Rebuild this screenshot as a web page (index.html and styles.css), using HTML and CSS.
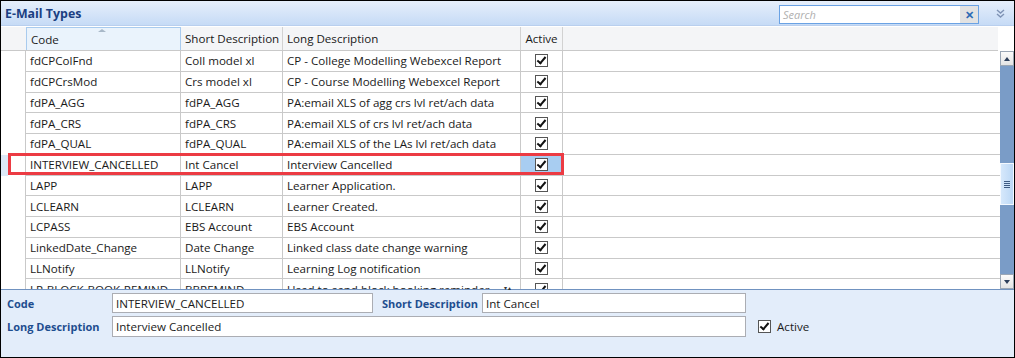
FILE: index.html
```html
<!DOCTYPE html>
<html lang="en">
<head>
    <meta charset="UTF-8">
    <title>E-Mail Types</title>
    <link rel="stylesheet" href="styles.css">
</head>
<body>
    <div class="window">
        <div class="titlebar">
            <span class="title">E-Mail Types</span>
            <div class="search">
                <span class="search-hint">Search</span>
                <span class="search-clear">&#x2715;</span>
            </div>
            <svg class="collapse" width="9" height="9" viewBox="0 0 9 9">
                <path d="M1 1 L4.5 4 L8 1 M1 5 L4.5 8 L8 5" fill="none" stroke="#7f93b5" stroke-width="1.4"/>
            </svg>
        </div>

        <div class="grid">
            <div class="row head">
                <div class="cell ind"></div>
                <div class="cell code sorted">Code<span class="sort-arrow"></span></div>
                <div class="cell short">Short Description</div>
                <div class="cell long">Long Description</div>
                <div class="cell active">Active</div>
                <div class="cell fill"></div>
            </div>

            <div class="body">
                <div class="rows">
                    <div class="row">
                        <div class="cell ind"></div>
                        <div class="cell code">fdCPColFnd</div>
                        <div class="cell short">Coll model xl</div>
                        <div class="cell long">CP - College Modelling Webexcel Report</div>
                        <div class="cell active"><span class="check"></span></div>
                        <div class="cell fill"></div>
                    </div>
                    <div class="row">
                        <div class="cell ind"></div>
                        <div class="cell code">fdCPCrsMod</div>
                        <div class="cell short">Crs model xl</div>
                        <div class="cell long">CP - Course Modelling Webexcel Report</div>
                        <div class="cell active"><span class="check"></span></div>
                        <div class="cell fill"></div>
                    </div>
                    <div class="row">
                        <div class="cell ind"></div>
                        <div class="cell code">fdPA_AGG</div>
                        <div class="cell short">fdPA_AGG</div>
                        <div class="cell long">PA:email XLS of agg crs lvl ret/ach data</div>
                        <div class="cell active"><span class="check"></span></div>
                        <div class="cell fill"></div>
                    </div>
                    <div class="row">
                        <div class="cell ind"></div>
                        <div class="cell code">fdPA_CRS</div>
                        <div class="cell short">fdPA_CRS</div>
                        <div class="cell long">PA:email XLS of crs lvl ret/ach data</div>
                        <div class="cell active"><span class="check"></span></div>
                        <div class="cell fill"></div>
                    </div>
                    <div class="row">
                        <div class="cell ind"></div>
                        <div class="cell code">fdPA_QUAL</div>
                        <div class="cell short">fdPA_QUAL</div>
                        <div class="cell long">PA:email XLS of the LAs lvl ret/ach data</div>
                        <div class="cell active"><span class="check"></span></div>
                        <div class="cell fill"></div>
                    </div>
                    <div class="row selected">
                        <div class="cell ind"><span class="ind-mark"></span></div>
                        <div class="cell code">INTERVIEW_CANCELLED</div>
                        <div class="cell short">Int Cancel</div>
                        <div class="cell long">Interview Cancelled</div>
                        <div class="cell active current"><span class="check"></span></div>
                        <div class="cell fill"></div>
                        <span class="highlight"></span>
                    </div>
                    <div class="row">
                        <div class="cell ind"></div>
                        <div class="cell code">LAPP</div>
                        <div class="cell short">LAPP</div>
                        <div class="cell long">Learner Application.</div>
                        <div class="cell active"><span class="check"></span></div>
                        <div class="cell fill"></div>
                    </div>
                    <div class="row">
                        <div class="cell ind"></div>
                        <div class="cell code">LCLEARN</div>
                        <div class="cell short">LCLEARN</div>
                        <div class="cell long">Learner Created.</div>
                        <div class="cell active"><span class="check"></span></div>
                        <div class="cell fill"></div>
                    </div>
                    <div class="row">
                        <div class="cell ind"></div>
                        <div class="cell code">LCPASS</div>
                        <div class="cell short">EBS Account</div>
                        <div class="cell long">EBS Account</div>
                        <div class="cell active"><span class="check"></span></div>
                        <div class="cell fill"></div>
                    </div>
                    <div class="row">
                        <div class="cell ind"></div>
                        <div class="cell code">LinkedDate_Change</div>
                        <div class="cell short">Date Change</div>
                        <div class="cell long">Linked class date change warning</div>
                        <div class="cell active"><span class="check"></span></div>
                        <div class="cell fill"></div>
                    </div>
                    <div class="row">
                        <div class="cell ind"></div>
                        <div class="cell code">LLNotify</div>
                        <div class="cell short">LLNotify</div>
                        <div class="cell long">Learning Log notification</div>
                        <div class="cell active"><span class="check"></span></div>
                        <div class="cell fill"></div>
                    </div>
                    <div class="row">
                        <div class="cell ind"></div>
                        <div class="cell code">LP-BLOCK-BOOK-REMIND</div>
                        <div class="cell short">BBREMIND</div>
                        <div class="cell long">Used to send block booking reminder</div>
                        <div class="cell active"><span class="check"></span></div>
                        <div class="cell fill"></div>
                    </div>
                </div>

                <div class="scrollbar">
                    <div class="sb-btn"><span class="arrow-up"></span></div>
                    <div class="sb-track">
                        <div class="sb-thumb"><span class="grip"></span></div>
                    </div>
                    <div class="sb-btn"><span class="arrow-down"></span></div>
                </div>
            </div>
            <span class="splitter">&#x25BE;&#x25B4;</span>
        </div>

        <div class="editor">
            <div class="edit-row">
                <label class="lbl">Code</label>
                <div class="field code-field">INTERVIEW_CANCELLED</div>
                <label class="lbl lbl-short">Short Description</label>
                <div class="field short-field">Int Cancel</div>
            </div>
            <div class="edit-row">
                <label class="lbl">Long Description</label>
                <div class="field long-field">Interview Cancelled</div>
                <span class="check edit-check"></span>
                <span class="check-text">Active</span>
            </div>
        </div>
    </div>
</body>
</html>
```

FILE: styles.css
```css
body {
    margin: 0;
    font-family: 'Open Sans', 'Noto Sans', sans-serif;
    font-size: 11.6px;
    color: #1a1a1a;
    background: #fff;
}

.window {
    width: 1015px;
    height: 358px;
    box-sizing: border-box;
    border: 1px solid #000;
    display: flex;
    flex-direction: column;
    overflow: hidden;
}

/* title bar */
.titlebar {
    height: 25px;
    flex: none;
    display: flex;
    align-items: center;
    background: linear-gradient(#e6effb, #c6dbf6);
    border-bottom: 1px solid #b9cfee;
    box-sizing: border-box;
}

.title {
    margin-left: 4px;
    font-weight: bold;
    font-size: 12.4px;
    color: #1b3f82;
}

.search {
    margin-left: auto;
    width: 200px;
    height: 19px;
    box-sizing: border-box;
    border: 1px solid #6aa2e4;
    background: #fff;
    display: flex;
    align-items: center;
    margin-top: 2px;
}

.search-hint {
    flex: 1;
    padding-left: 3px;
    font-style: italic;
    font-size: 11px;
    color: #b0b0b0;
}

.search-clear {
    width: 18px;
    height: 17px;
    background: #e2e2e2;
    color: #2a6ab5;
    font-size: 11px;
    font-weight: bold;
    text-align: center;
    line-height: 17px;
}

.collapse {
    margin: 0 9px 0 17px;
}

/* grid */
.grid {
    position: relative;
    flex: none;
    height: 263px;
    display: flex;
    flex-direction: column;
}

.row {
    display: flex;
    height: 20.75px;
    box-sizing: border-box;
    position: relative;
    flex: none;
}

.cell {
    box-sizing: border-box;
    border-right: 1px solid #c9c9c9;
    padding-left: 4px;
    display: flex;
    align-items: center;
    white-space: nowrap;
    overflow: hidden;
}

.ind { width: 25px; padding: 0; }
.code { width: 155px; }
.short { width: 102px; }
.long { width: 238px; }
.active { width: 42px; justify-content: center; padding: 0; }
.fill { flex: 1; border-right: none; }

.head {
    height: 24px;
    background: #f4f5f7;
    border-bottom: 1px solid #c9c9c9;
    margin-right: 16px;
    margin-top: 1px;
}

.head .cell { border-right-color: #d2d2d2; }
.head .ind { border-right: none; }

.head .sorted {
    position: relative;
    background: #eaf3fc;
    border: 1px solid #a9cbee;
    border-bottom: none;
}

.sort-arrow {
    position: absolute;
    top: 1px;
    left: 71px;
    border-left: 4px solid transparent;
    border-right: 4px solid transparent;
    border-bottom: 3px solid #a8b8c8;
}

.body {
    flex: 1;
    display: flex;
    overflow: hidden;
}

.rows {
    flex: 1;
    overflow: hidden;
}

.rows .cell { border-bottom: 1px solid #c9c9c9; }
.rows .ind { border-bottom: none; }

.current { background: #a8cdf1; }

.ind-mark {
    width: 7px;
    height: 100%;
    background: #dce9f7;
}

.highlight {
    position: absolute;
    left: 7px;
    top: -2px;
    width: 556px;
    height: 22px;
    box-sizing: border-box;
    border: 3px solid #ec3b43;
}

.check {
    width: 13px;
    height: 13px;
    box-sizing: border-box;
    border: 1px solid #555;
    background: #fff;
    position: relative;
    flex: none;
}

.check::after {
    content: "";
    position: absolute;
    left: 3px;
    top: 0px;
    width: 3px;
    height: 7px;
    border-right: 2px solid #111;
    border-bottom: 2px solid #111;
    transform: rotate(40deg);
}

/* scrollbar */
.scrollbar {
    width: 14px;
    display: flex;
    flex-direction: column;
    background: #7a9cc7;
}

.sb-btn {
    height: 15px;
    flex: none;
    background: linear-gradient(#fbfbfb, #e4e4e4);
    border: 1px solid #9aa6b5;
    box-sizing: border-box;
    display: flex;
    align-items: center;
    justify-content: center;
}

.arrow-up {
    border-left: 3px solid transparent;
    border-right: 3px solid transparent;
    border-bottom: 4px solid #2c3e5a;
}

.arrow-down {
    border-left: 3px solid transparent;
    border-right: 3px solid transparent;
    border-top: 4px solid #2c3e5a;
}

.sb-track {
    flex: 1;
}

.sb-thumb {
    height: 42px;
    margin-top: 97px;
    background: linear-gradient(90deg, #d6e8fb, #bcd8f6);
    border: 1px solid #f4f9ff;
    box-sizing: border-box;
    display: flex;
    align-items: center;
    justify-content: center;
}

.grip {
    width: 6px;
    height: 7px;
    background: repeating-linear-gradient(#3d5b83 0 1px, transparent 1px 2px);
}

.splitter {
    position: absolute;
    left: 503px;
    bottom: -3px;
    font-size: 6px;
    color: #333;
    letter-spacing: 1px;
}

/* editor */
.editor {
    flex: 1;
    background: #e3edfa;
    border-top: 1px solid #7092c0;
    padding: 3px 0 0 6px;
    display: flex;
    flex-direction: column;
    gap: 3px;
}

.edit-row {
    display: flex;
    align-items: center;
}

.lbl {
    width: 105px;
    font-weight: bold;
    color: #1e4d8f;
    font-size: 11px;
}

.lbl-short {
    width: auto;
    margin: 0 4px 0 9px;
}

.field {
    height: 20px;
    box-sizing: border-box;
    border: 1px solid #abadb3;
    background: #fff;
    padding: 0 3px;
    display: flex;
    align-items: center;
}

.code-field { width: 261px; }
.short-field { width: 264px; }
.long-field { width: 634px; height: 21px; }

.edit-check {
    margin-left: 12px;
}

.check-text {
    margin-left: 6px;
}
```
